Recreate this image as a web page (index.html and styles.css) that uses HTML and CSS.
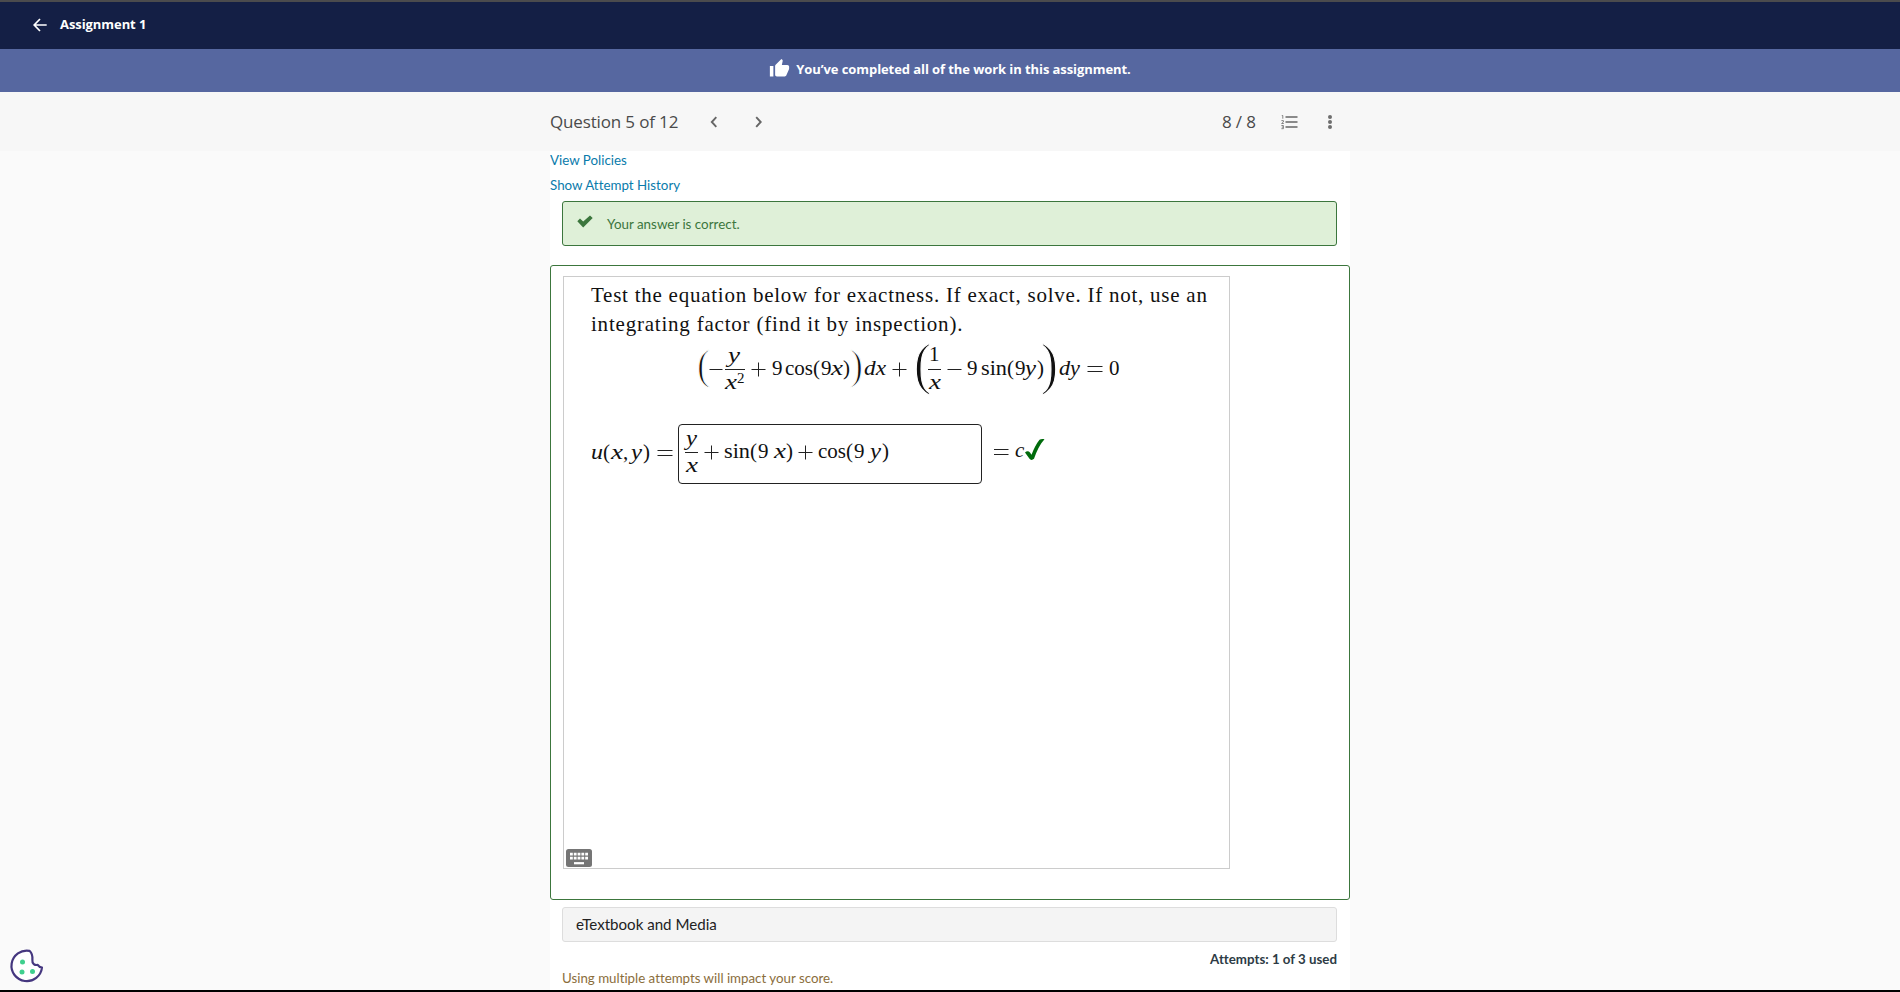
FILE: index.html
```html
<!DOCTYPE html>
<html lang="en">
<head>
<meta charset="utf-8">
<title>Assignment 1</title>
<link rel="stylesheet" href="styles.css">
</head>
<body>
<header class="topbar">
  <svg class="back" width="14" height="14" viewBox="0 0 14 14"><path d="M13.700 7H1.400M7 1 1.200 7 7 13" fill="none" stroke="#fff" stroke-width="1.700"/></svg>
  <span class="topbar-title">Assignment 1</span>
</header>
<div class="banner">
  <svg width="21" height="21" viewBox="0 0 24 24"><path fill="#fff" d="M1 21h4V9H1v12zm22-11c0-1.100-.9-2-2-2h-6.310l.95-4.570.03-.32c0-.41-.17-.79-.44-1.060L14.170 1 7.590 7.590C7.220 7.950 7 8.450 7 9v10c0 1.100.9 2 2 2h9c.83 0 1.540-.5 1.840-1.220l3.020-7.050c.09-.23.14-.47.14-.73v-2z"/></svg>
  <span class="banner-text">You’ve completed all of the work in this assignment.</span>
</div>
<div class="qbar">
  <div class="qbar-in">
    <span class="qtitle">Question 5 of 12</span>
    <svg class="prev" width="8" height="12" viewBox="0 0 8 12"><path d="M6.300 1.200 1.800 6l4.500 4.800" fill="none" stroke="#666" stroke-width="1.900"/></svg>
    <svg class="next" width="8" height="12" viewBox="0 0 8 12"><path d="M1.200 1.200 5.700 6l-4.500 4.800" fill="none" stroke="#666" stroke-width="1.900"/></svg>
    <span class="score">8 / 8</span>
    <svg class="list" width="18" height="16" viewBox="0 0 18 16"><path d="M4.500 3h12M4.500 8h12M4.500 13h12" stroke="#8a8a8a" stroke-width="2"/><path d="M.8 1.500h1v3.200M.4 6.600h2v1.400l-1.800 1.500h2.200M.4 11.500h2v3.200h-2M.8 13.100h1.500" fill="none" stroke="#777" stroke-width=".9"/></svg>
    <svg class="dots" width="6" height="16" viewBox="0 0 6 16"><g fill="#6e6e6e"><circle cx="3" cy="3" r="2"/><circle cx="3" cy="8" r="2"/><circle cx="3" cy="13" r="2"/></g></svg>
  </div>
</div>
<main class="page">
  <a class="link">View Policies</a>
  <a class="link">Show Attempt History</a>
  <div class="alert">
    <svg width="16" height="13" viewBox="0 0 16 13"><path d="M.3 6.300 3 3.600l3.200 3L13 .4l2.700 2.500L6.200 12.400z" fill="#3c763d"/></svg>
    <span>Your answer is correct.</span>
  </div>
  <section class="question">
    <div class="math">
      <p class="prose"><span class="l1">Test the equation below for exactness. If exact, solve. If not, use an</span><br><span class="l2">integrating factor (find it by inspection).</span></p>
      <svg class="formula" width="600" height="60" viewBox="591 340 600 60">
        <text class="big1" x="697" y="379" textLength="13" lengthAdjust="spacingAndGlyphs">(</text>
        <path class="rule" d="M709.500 369.500h13M725 369.500h20"/>
        <text class="it" x="728" y="362" textLength="12" lengthAdjust="spacingAndGlyphs">y</text>
        <text class="it" x="725" y="389" textLength="12" lengthAdjust="spacingAndGlyphs">x</text>
        <text class="sup" x="737" y="383">2</text>
        <path class="rule" d="M751.500 369.500h14M758.500 362.500v14"/>
        <text x="772" y="375">9</text>
        <text x="785" y="375" textLength="28" lengthAdjust="spacingAndGlyphs">cos</text>
        <text x="813" y="375">(</text>
        <text x="821" y="375">9</text>
        <text class="it" x="831" y="375" textLength="12" lengthAdjust="spacingAndGlyphs">x</text>
        <text x="843" y="375">)</text>
        <text class="big1" x="850" y="379" textLength="13" lengthAdjust="spacingAndGlyphs">)</text>
        <text class="it" x="864" y="375" textLength="22" lengthAdjust="spacingAndGlyphs">dx</text>
        <path class="rule" d="M892.500 369.500h14M899.500 362.500v14"/>
        <text class="big2" x="914" y="382.500" textLength="17" lengthAdjust="spacingAndGlyphs">(</text>
        <text x="929" y="361">1</text>
        <path class="rule" d="M928 369.500h13M947.500 369.500h14"/>
        <text class="it" x="929" y="389" textLength="12" lengthAdjust="spacingAndGlyphs">x</text>
        <text x="967" y="375">9</text>
        <text x="981" y="375" textLength="26" lengthAdjust="spacingAndGlyphs">sin</text>
        <text x="1007" y="375">(</text>
        <text x="1015" y="375">9</text>
        <text class="it" x="1025" y="375" textLength="11" lengthAdjust="spacingAndGlyphs">y</text>
        <text x="1037" y="375">)</text>
        <text class="big2" x="1041" y="382.500" textLength="17" lengthAdjust="spacingAndGlyphs">)</text>
        <text class="it" x="1059" y="375" textLength="21" lengthAdjust="spacingAndGlyphs">dy</text>
        <path class="rule" d="M1087.500 366.500h15M1087.500 371.500h15"/>
        <text x="1109" y="375">0</text>
      </svg>
      <div class="answer">
        <svg width="87" height="60" viewBox="591 424 87 60">
          <text class="it" x="591" y="459" textLength="12" lengthAdjust="spacingAndGlyphs">u</text>
          <text x="603" y="459">(</text>
          <text class="it" x="611" y="459" textLength="12" lengthAdjust="spacingAndGlyphs">x</text>
          <text x="623" y="459">,</text>
          <text class="it" x="631" y="459" textLength="11" lengthAdjust="spacingAndGlyphs">y</text>
          <text x="643" y="459">)</text>
          <path class="rule" d="M657.500 450.500h15M657.500 455.500h15"/>
        </svg>
        <div class="box">
          <svg width="302" height="58" viewBox="679 425 302 58">
            <text class="it" x="686" y="445" textLength="11" lengthAdjust="spacingAndGlyphs">y</text>
            <path class="rule" d="M685 452.500h13"/>
            <text class="it" x="686" y="472" textLength="12" lengthAdjust="spacingAndGlyphs">x</text>
            <path class="rule" d="M704.500 452.500h14M711.500 445.500v14"/>
            <text x="724" y="458" textLength="26" lengthAdjust="spacingAndGlyphs">sin</text>
            <text x="750" y="458">(</text>
            <text x="758" y="458">9</text>
            <text class="it" x="774" y="458" textLength="12" lengthAdjust="spacingAndGlyphs">x</text>
            <text x="786" y="458">)</text>
            <path class="rule" d="M798.500 452.500h14M805.500 445.500v14"/>
            <text x="818" y="458" textLength="28" lengthAdjust="spacingAndGlyphs">cos</text>
            <text x="846" y="458">(</text>
            <text x="854" y="458">9</text>
            <text class="it" x="870" y="458" textLength="11" lengthAdjust="spacingAndGlyphs">y</text>
            <text x="882" y="458">)</text>
          </svg>
        </div>
        <svg width="70" height="60" viewBox="982 424 70 60">
          <path class="rule" d="M994 449.500h14.500M994 454.500h14.500"/>
          <text class="it" x="1015" y="457">c</text>
          <path d="M1025 452.500c1.500-1.500 3.500-1.800 5 0l1.500 2.200c2.500-6.500 5-11.500 8-15 1.500-1 3.500-1 5-.4-4.500 5-8 12-10.500 19.500-1.500 1.500-3.500 1.500-4.500 0z" fill="#006b0c"/>
        </svg>
      </div>
      <svg class="kbd" width="26" height="18" viewBox="0 0 26 18"><rect width="26" height="18" rx="2.500" fill="#757575"/><path d="M4 5.200h18M4 9.200h18" stroke="#fff" stroke-width="2.800" stroke-dasharray="2.800 1"/><path d="M8 14.200h10" stroke="#fff" stroke-width="2.200"/></svg>
    </div>
  </section>
  <div class="etext">eTextbook and Media</div>
  <div class="attempts">Attempts: 1 of 3 used</div>
  <div class="impact">Using multiple attempts will impact your score.<br>10% score reduction after attempt 2</div>
</main>
<div class="cookie">
  <svg width="34" height="34" viewBox="0 0 34 34"><path d="M19.500 1.800A15.300 15.300 0 1 0 32 18.500c-1.800-.2-3.300-1-4.300-2.600-3 .6-5.700-1.300-5.300-4.800.3-3.600-.2-6.900-2.900-9.300z" fill="#fff" stroke="#45377f" stroke-width="2.200" stroke-linejoin="round"/><g fill="#3fcf8e"><circle cx="12.500" cy="13" r="2.500"/><circle cx="12" cy="23" r="2.500"/><circle cx="22.500" cy="22.500" r="2.500"/></g></svg>
</div>
<div class="edge"></div>
</body>
</html>
```
FILE: styles.css
```css
* { box-sizing: border-box; }
body { margin: 0; height: 992px; overflow: hidden; background: #fafafa; font-family: "Open Sans", sans-serif; display: flex; flex-direction: column; }
svg { display: block; flex: none; overflow: visible; }
.topbar { flex: none; height: 49px; background: #141f45; border-top: 2px solid #4b4b4d; display: flex; align-items: center; padding: 0 0 3px 33px; color: #fff; }
.topbar-title { margin-left: 13px; font-size: 13px; font-weight: 700; line-height: 20px; letter-spacing: -.07px; }
.back { margin-top: 2px; }
.banner { flex: none; height: 43px; background: #5667a0; color: #fff; display: flex; justify-content: center; align-items: center; gap: 6px; padding-bottom: 4px; }
.banner-text { font-size: 13px; font-weight: 700; line-height: 20px; letter-spacing: -.08px; padding-top: 1px; }
.qbar { flex: none; height: 59px; background: #f7f7f7; }
.qbar-in { width: 800px; margin: 0 auto; height: 59px; display: flex; align-items: center; color: #4a4a4a; font-size: 17px; letter-spacing: -.15px; }
.qtitle { width: 160px; white-space: nowrap; }
.next { margin-left: 37px; }
.score { margin-left: auto; width: 59px; }
.dots { margin: 0 17px 0 28px; }
.page { flex: none; width: 800px; height: 841px; overflow: hidden; margin: 0 auto; background: #fff; font-family: Lato, sans-serif; font-variant-ligatures: none; display: flex; flex-direction: column; }
.page > * { flex: none; }
.link { color: #0a7bab; font-size: 13.35px; line-height: 18px; height: 25px; }
.alert { height: 45px; margin: 0 13px 0 12px; border: 1px solid #3c763d; border-radius: 3px; background: #dff0d8; color: #3c763d; font-size: 13.4px; display: flex; align-items: center; padding: 1px 0 0 14px; gap: 14px; }
.alert svg { margin-top: -6px; }
.question { margin-top: 19px; height: 635px; border: 1px solid #3c763d; border-radius: 3px; padding: 10px 12px; }
.math { width: 667px; height: 593px; border: 1px solid #ccc; padding: 4px 0 0 27px; display: flex; flex-direction: column; font-family: "Liberation Serif", serif; font-size: 21px; color: #111; }
.prose { margin: 0; line-height: 28.5px; white-space: nowrap; }
.l1 { letter-spacing: .75px; }
.l2 { letter-spacing: .79px; }
.math text { fill: #111; font-family: "Liberation Serif", serif; font-size: 21px; }
.math .it { font-style: italic; }
.math .sup { font-size: 15px; }
.math .big1, .math .big2 { stroke: #fff; stroke-width: 1.2px; }
.math .big1 { font-size: 42px; }
.math .big2 { font-size: 56px; }
.rule { stroke: #222; stroke-width: 1; fill: none; }
.formula { margin-top: 2px; }
.answer { margin-top: 24px; display: flex; }
.box { width: 304px; height: 60px; border: 1px solid #222; border-radius: 4px; }
.kbd { margin: auto 0 1px -25px; }
.etext { height: 35px; margin: 7px 13px 0 12px; background: #f4f4f4; border: 1px solid #ddd; border-radius: 3px; padding-left: 13px; font-size: 15.1px; line-height: 33px; color: #222; }
.attempts { margin: 7px 13px 0 0; text-align: right; font-size: 13.3px; font-weight: 700; line-height: 20px; color: #2d3b45; }
.impact { margin: 0 0 0 12px; font-size: 13.3px; line-height: 18px; color: #8a6d3b; }
.cookie { position: absolute; left: 10px; top: 949px; }
.edge { position: absolute; left: 0; right: 0; top: 990px; height: 2px; background: #000; }
```
